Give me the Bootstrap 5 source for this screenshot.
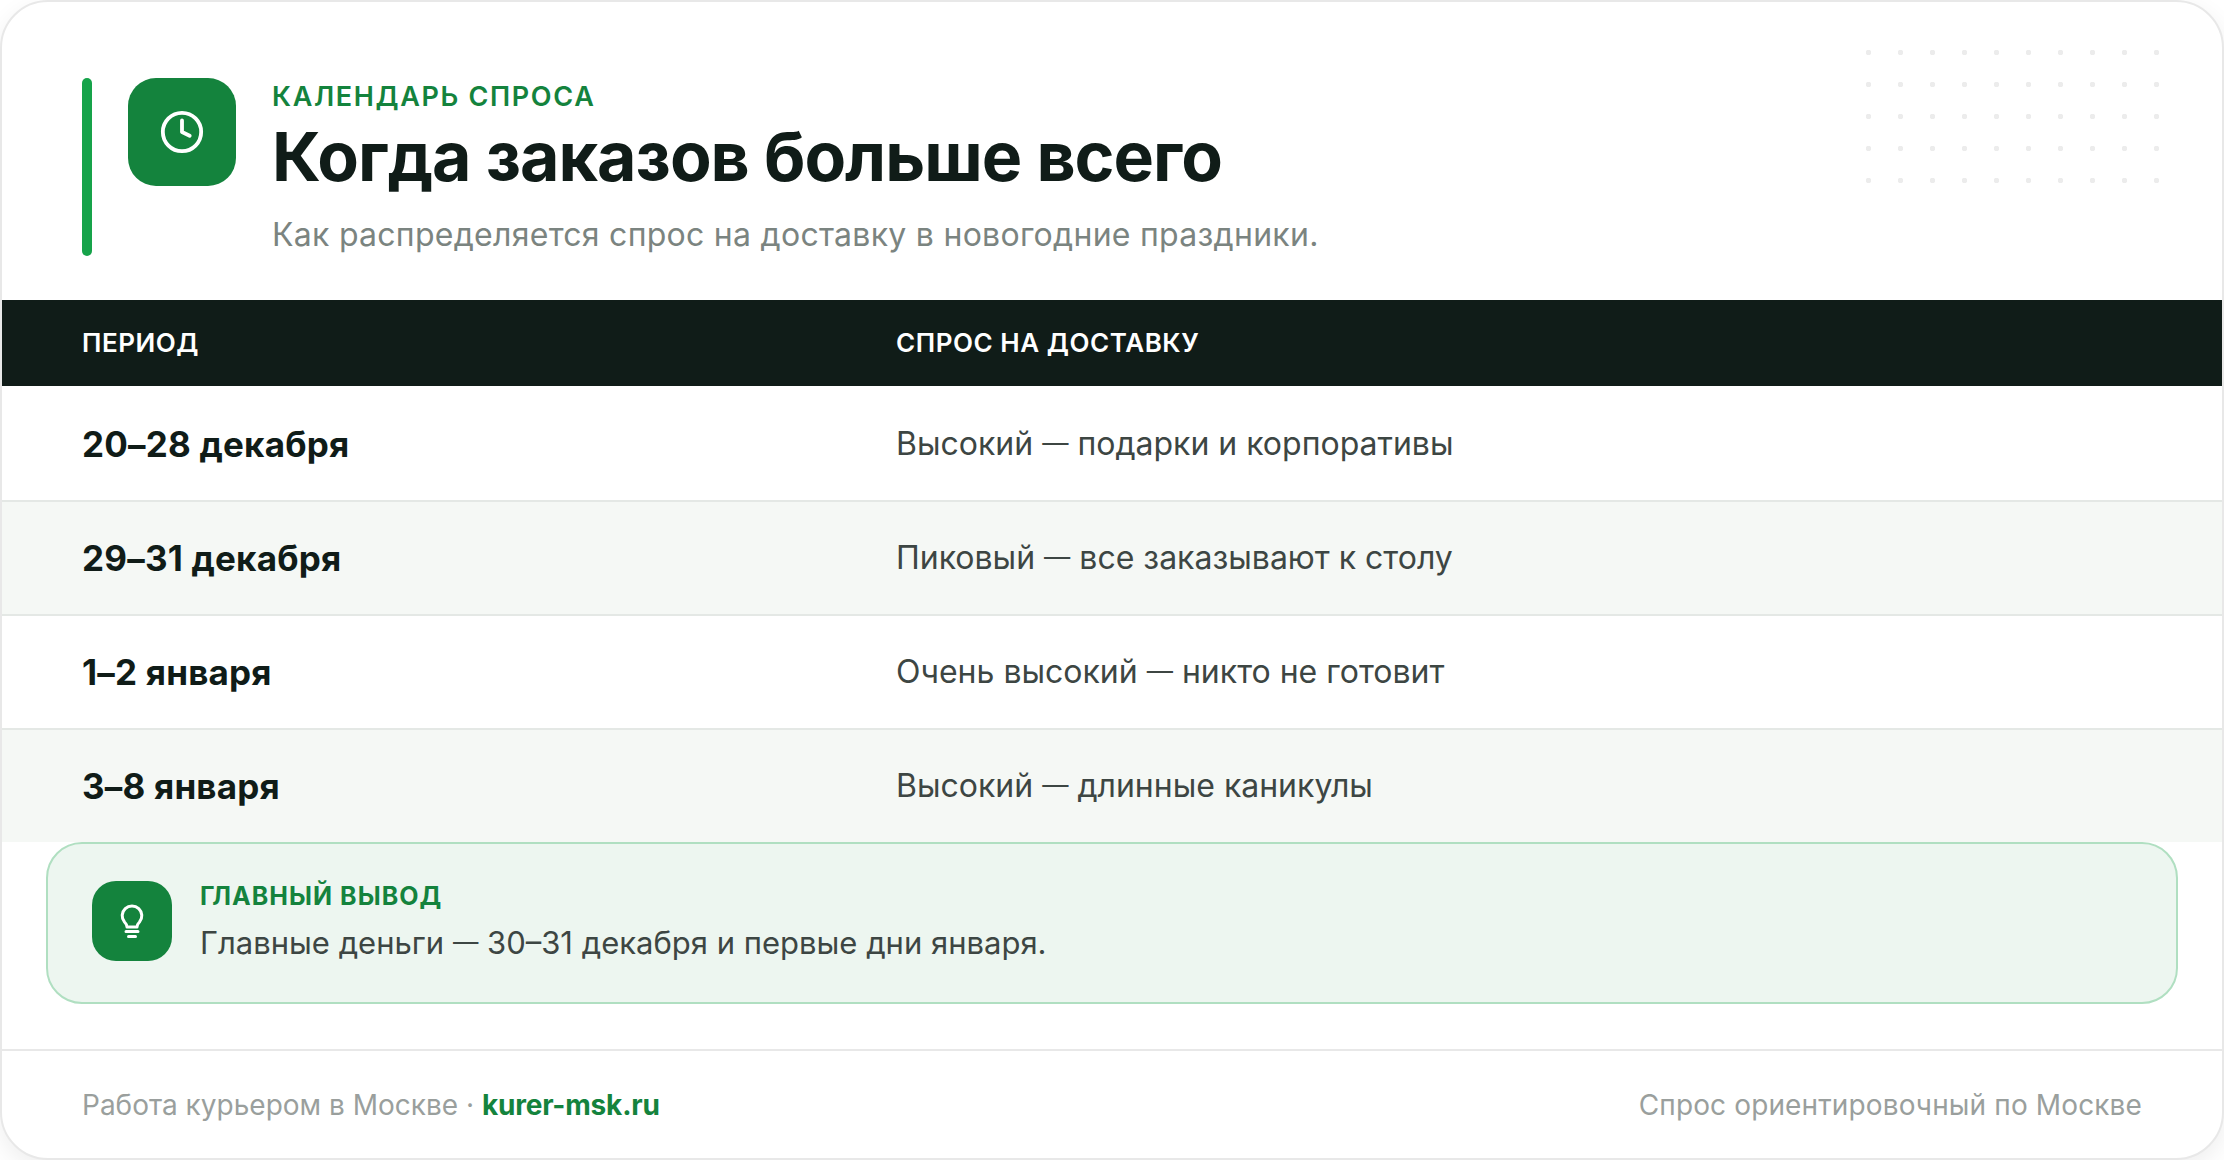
<!DOCTYPE html>
<html lang="ru">
<head>
  <meta charset="UTF-8" />
  <title>Календарь спроса</title>
  <link href="https://cdn.jsdelivr.net/npm/bootstrap@5.3.2/dist/css/bootstrap.min.css" rel="stylesheet" />
  <style>
    body {
      background: #fff;
      font-family: "Inter", "Noto Sans", sans-serif;
      color: #101c18;
      overflow: hidden;
    }
    .sheet {
      width: 2224px;
      height: 1160px;
      background: #fff;
      border: 2px solid #e8e8e8;
      border-radius: 48px;
      overflow: hidden;
      box-shadow: 0 8px 24px rgba(0, 0, 0, .07);
    }
    .dots {
      top: 48px;
      right: 63px;
      width: 293px;
      height: 133px;
      background-image: radial-gradient(circle at 2.5px 2.5px, #ececec 2.5px, transparent 3px);
      background-size: 32px 32px;
    }
    .head-box { padding: 76px 80px 0; height: 298px; }
    .accent { width: 10px; height: 178px; background: #16a34a; border-radius: 5px; margin-right: 36px; }
    .icon-big { width: 108px; height: 108px; background: #14833d; border-radius: 28px; margin-right: 36px; }
    .kicker { font-size: 27px; line-height: 36px; font-weight: 600; letter-spacing: 1.65px; color: #14833d; margin-top: 1px; }
    .title-main { font-size: 68px; line-height: 82px; font-weight: 700; letter-spacing: -1px; margin: 0 0 16px; color: #101c18; }
    .subtitle { font-size: 32px; line-height: 44px; letter-spacing: .27px; color: #7b8480; margin: 0; }
    .demand { table-layout: fixed; width: 100%; margin: 0; border-collapse: separate; border-spacing: 0; }
    .demand th, .demand td { padding: 0 0 0 80px; vertical-align: middle; border: 0; }
    .demand th:first-child { width: 814px; }
    .demand thead th { background: #101c18; color: #fff; height: 88px; padding-bottom: 2px; border-bottom: 2px solid #fff; font-size: 26px; font-weight: 600; letter-spacing: .55px; }
    .demand tbody td { height: 114px; border-bottom: 2px solid #e4e8e5; }
    .demand tbody tr:last-child td { border-bottom: 0; height: 112px; }
    .demand tbody tr:nth-child(even) td { background: #f5f8f5; }
    .period { font-size: 35px; font-weight: 700; letter-spacing: .2px; color: #101c18; }
    .level { font-size: 32px; color: #3d4643; }
    .dash { font-size: .82em; vertical-align: .1em; }
    .callout { margin: 0 44px; height: 162px; background: #edf6f0; border: 2px solid #b0dfc1; border-radius: 36px; padding: 0 44px; }
    .icon-small { width: 80px; height: 80px; background: #14833d; border-radius: 24px; margin: 0 28px 4px 0; }
    .callout-body { padding-bottom: 3px; }
    .callout-label { font-size: 25px; line-height: 34px; font-weight: 700; letter-spacing: 1.05px; color: #14833d; }
    .callout-text { font-size: 31px; line-height: 44px; color: #3d4643; margin-top: 7px; }
    .foot-box { margin-top: 45px; border-top: 2px solid #e8e8e8; padding: 2px 80px 0; height: 108px; font-size: 28px; color: #9a9f9d; }
    .foot-box b { color: #14833d; font-weight: 700; letter-spacing: -.2px; }
    .foot-note { letter-spacing: .13px; }
  </style>
</head>
<body class="m-0">
<div class="sheet position-relative d-flex flex-column">
  <div class="dots position-absolute"></div>

  <div class="head-box d-flex align-items-start flex-shrink-0">
    <div class="accent"></div>
    <div class="icon-big d-flex align-items-center justify-content-center">
      <svg width="46" height="46" viewBox="0 0 24 24" fill="none" stroke="#fff" stroke-width="2" stroke-linecap="round" stroke-linejoin="round"><circle cx="12" cy="12" r="10"/><path d="M12 6v6l4 2"/></svg>
    </div>
    <div>
      <div class="kicker text-uppercase">Календарь спроса</div>
      <h1 class="title-main">Когда заказов больше всего</h1>
      <p class="subtitle">Как распределяется спрос на доставку в новогодние праздники.</p>
    </div>
  </div>

  <table class="table demand">
    <thead>
      <tr><th>ПЕРИОД</th><th>СПРОС НА ДОСТАВКУ</th></tr>
    </thead>
    <tbody>
      <tr><td class="period">20–28 декабря</td><td class="level">Высокий <span class="dash">—</span> подарки и корпоративы</td></tr>
      <tr><td class="period">29–31 декабря</td><td class="level">Пиковый <span class="dash">—</span> все заказывают к столу</td></tr>
      <tr><td class="period">1–2 января</td><td class="level">Очень высокий <span class="dash">—</span> никто не готовит</td></tr>
      <tr><td class="period">3–8 января</td><td class="level">Высокий <span class="dash">—</span> длинные каникулы</td></tr>
    </tbody>
  </table>

  <div class="callout d-flex align-items-center">
    <div class="icon-small d-flex align-items-center justify-content-center">
      <svg width="80" height="80" viewBox="0 0 80 80" fill="none" stroke="#fff" stroke-width="3" stroke-linecap="round" stroke-linejoin="round"><path d="M35 46c0-2-1-3.500-2.500-5a9.800 9.800 0 1 1 15 0c-1.500 1.500-2.500 3-2.500 5z"/><path d="M34 50.500h12M36.500 55.500h7"/></svg>
    </div>
    <div class="callout-body">
      <div class="callout-label text-uppercase">Главный вывод</div>
      <div class="callout-text">Главные деньги <span class="dash">—</span> 30–31 декабря и первые дни января.</div>
    </div>
  </div>

  <div class="foot-box d-flex align-items-center justify-content-between">
    <span>Работа курьером в Москве · <b>kurer-msk.ru</b></span>
    <span class="foot-note">Спрос ориентировочный по Москве</span>
  </div>
</div>
<script src="https://cdn.jsdelivr.net/npm/bootstrap@5.3.2/dist/js/bootstrap.bundle.min.js"></script>
</body>
</html>
